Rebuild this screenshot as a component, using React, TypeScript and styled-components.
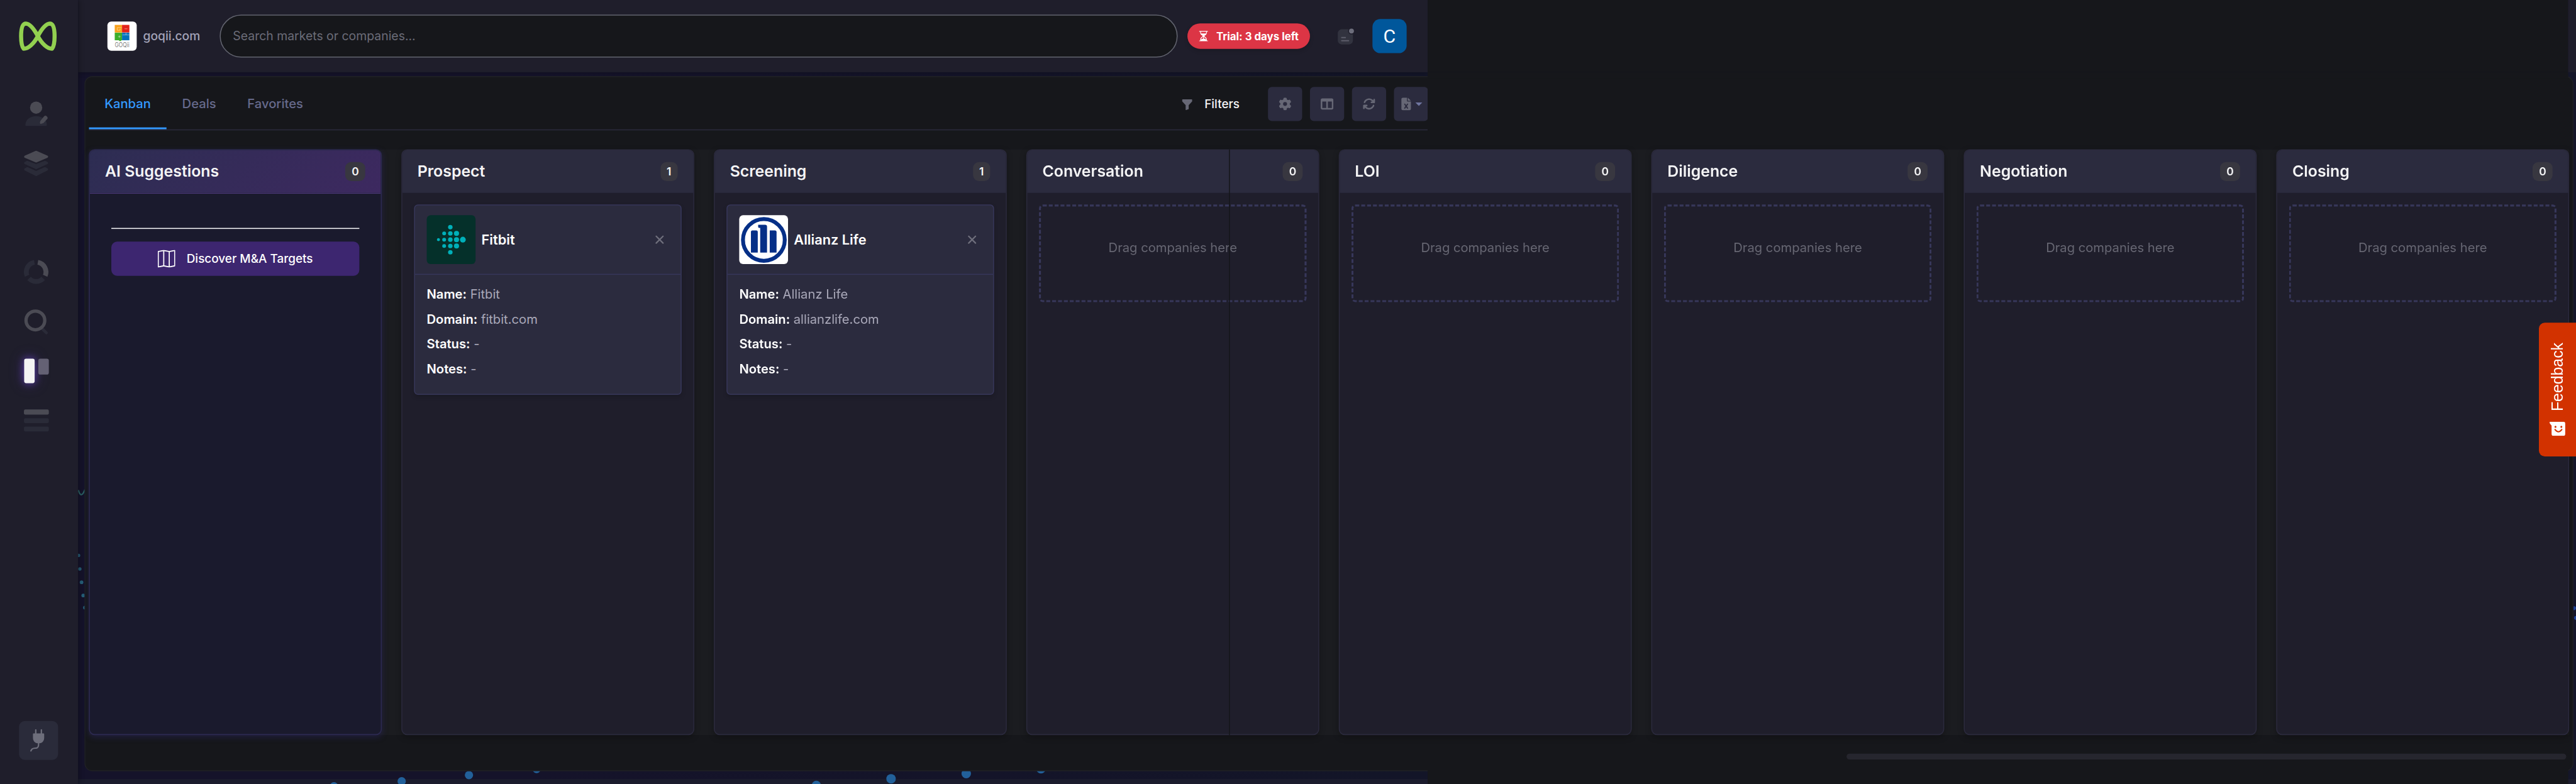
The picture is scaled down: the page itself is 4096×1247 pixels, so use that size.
import React from "react";
import styled, { createGlobalStyle, css } from "styled-components";
import { BsFunnelFill, BsHourglassSplit, BsMap, BsPlugFill } from "react-icons/bs";
import { FaArrowsRotate, FaFileExcel, FaGear, FaTableColumns } from "react-icons/fa6";

const WIDTH = 5276;
const HEIGHT = 1606;
const SCALE = 4096 / WIDTH;

const c = {
  base: "#16171b",
  surface: "#1f1e2b",
  raised: "#2b2b3e",
  line: "#2b2a3d",
  cardLine: "#37375a",
  muted: "#666775",
  text: "#f4f4f5",
};

const GlobalStyle = createGlobalStyle`
  * { box-sizing: border-box; }
  html, body { margin: 0; padding: 0; background: ${c.base}; overflow: hidden; }
  body { font-family: Inter, "Liberation Sans", sans-serif; color: ${c.text}; }
`;

const Viewport = styled.div`
  width: 4096px;
  height: 1247px;
  overflow: hidden;
  background: ${c.base};
`;

const Shell = styled.div`
  position: relative;
  display: flex;
  width: ${WIDTH}px;
  height: ${HEIGHT + 1}px;
  transform: scale(${SCALE});
  transform-origin: 0 0;
  background: linear-gradient(90deg, #15132a 0, #15132a 20%, #131528 55%, #15162a 100%);
`;

const Backdrop = styled.svg`
  position: absolute;
  inset: 0;
`;

/* ---------- sidebar ---------- */

const Sidebar = styled.nav`
  position: relative;
  z-index: 2;
  flex: none;
  width: 160px;
  display: flex;
  flex-direction: column;
  background: ${c.surface};
  box-shadow: 2px 0 10px rgba(0, 0, 0, 0.3);
`;

const Brand = styled.div`
  height: 184px;
  padding: 40px 0 0 35px;
`;

const NavItem = styled.div<{ $gap?: number; $active?: boolean }>`
  flex: none;
  height: 60px;
  margin-top: ${(p) => p.$gap ?? 42}px;
  padding-left: 44px;
  svg {
    display: block;
    overflow: visible;
  }
  ${(p) =>
    p.$active &&
    css`
      rect:first-child {
        filter: drop-shadow(0 0 8px rgba(98, 62, 190, 0.8)) drop-shadow(0 0 12px rgba(98, 62, 190, 0.3));
      }
    `}
`;

const PlugButton = styled.div`
  width: 80px;
  height: 80px;
  margin: auto 0 50px 39px;
  display: flex;
  align-items: center;
  justify-content: center;
  border-radius: 12px;
  background: #2a2b3a;
  color: #6d6e7b;
  font-size: 46px;
`;

/* ---------- header ---------- */

const Main = styled.div`
  position: relative;
  flex: 1;
  min-width: 0;
  display: flex;
  flex-direction: column;
`;

const TopRow = styled.div`
  flex: none;
  display: flex;
  height: 148px;
`;

const Header = styled.header`
  width: 2764px;
  display: flex;
  align-items: center;
  padding-left: 60px;
  background: ${c.surface};
  box-shadow: 0 2px 10px rgba(0, 0, 0, 0.25);
`;

const HeaderGap = styled.div`
  flex: 1;
  background: ${c.base};
`;

const HeaderEdge = styled.div`
  width: 16px;
  background: ${c.surface};
`;

const CompanyLogo = styled.svg`
  flex: none;
  width: 60px;
  height: 60px;
  border-radius: 8px;
  background: #fff;
`;

const Domain = styled.span`
  width: 116px;
  margin: 0 41px 0 13px;
  font-size: 24.8px;
  font-weight: 500;
  color: #a3a3b8;
  white-space: nowrap;
`;

const Search = styled.div`
  width: 1962px;
  height: 88px;
  display: flex;
  align-items: center;
  padding: 0 0 1px 25px;
  border: 2px solid #62646f;
  border-radius: 44px;
  background: ${c.base};
  color: #6b6c78;
  font-size: 25px;
`;

const Trial = styled.div`
  width: 251px;
  height: 52px;
  margin-left: 20px;
  display: flex;
  align-items: center;
  padding-left: 21px;
  gap: 14px;
  border-radius: 26px;
  background: #dc3545;
  box-shadow: 0 4px 8px rgba(0, 0, 0, 0.15);
  color: #fff;
  font-size: 21.7px;
  font-weight: 700;
  white-space: nowrap;
  svg { font-size: 24px; }
`;

const NoteIcon = styled.svg`
  flex: none;
  margin: 0 36px 0 55px;
`;

const Avatar = styled.div`
  width: 70px;
  height: 70px;
  display: flex;
  align-items: center;
  justify-content: center;
  border-radius: 16px;
  background: #00579b;
  color: #fff;
  font: 400 39px Roboto, sans-serif;
`;

/* ---------- panel and toolbar ---------- */

const Panel = styled.main`
  width: 5098px;
  height: 1424px;
  margin: 8px 0 0 13px;
  padding: 0 7px;
  display: flex;
  flex-direction: column;
  border: 2px solid #1f2024;
  border-radius: 16px;
  background: ${c.base};
`;

const Toolbar = styled.div`
  flex: none;
  width: 2742px;
  height: 109px;
  display: flex;
  border-bottom: 2px solid ${c.line};
  overflow: hidden;
`;

const Tab = styled.div<{ $active?: boolean }>`
  height: 107px;
  padding: 6px 32px 0;
  display: flex;
  align-items: center;
  border-bottom: 4px solid ${(p) => (p.$active ? "#3399ff" : "transparent")};
  color: ${(p) => (p.$active ? "#3399ff" : "#666a8c")};
  font-size: 26px;
  font-weight: 500;
`;

const Filters = styled.div`
  margin-left: auto;
  width: 178px;
  display: flex;
  align-items: center;
  gap: 23px;
  padding-top: 2px;
  font-size: 24.3px;
  font-weight: 500;
  svg { font-size: 25px; color: ${c.muted}; position: relative; top: 2px; }
`;

const Tools = styled.div`
  display: flex;
  gap: 16px;
  padding-top: 20px;
  margin-right: -1px;
`;

const Tool = styled.div`
  width: 70px;
  height: 70px;
  display: flex;
  align-items: center;
  justify-content: center;
  gap: 6px;
  border-radius: 8px;
  background: ${c.raised};
  color: ${c.muted};
  font-size: 26px;
`;

const Caret = styled.i`
  border: 7px solid transparent;
  border-top-color: #7076a0;
  border-bottom: 0;
`;

/* ---------- board ---------- */

const Board = styled.div`
  flex: none;
  height: 1200px;
  margin-top: 39px;
  display: flex;
  gap: 40px;
  background: #1b1c20;
`;

const Column = styled.section<{ $ai?: boolean }>`
  flex: none;
  width: 600px;
  display: flex;
  flex-direction: column;
  border: 2px solid ${(p) => (p.$ai ? "#2d2a52" : c.line)};
  border-radius: 12px;
  background: ${(p) => (p.$ai ? "#1a1a2d" : c.surface)};
  box-shadow: ${(p) =>
    p.$ai ? "0 4px 12px rgba(50, 44, 120, 0.35)" : "0 4px 12px rgba(0, 0, 0, 0.25)"};
`;

const ColumnHead = styled.div<{ $ai?: boolean }>`
  flex: none;
  height: ${(p) => (p.$ai ? 89 : 87)}px;
  padding: 0 32px;
  display: flex;
  align-items: center;
  justify-content: space-between;
  border-radius: 10px 10px 0 0;
  background: ${(p) => (p.$ai ? "linear-gradient(135deg, #2d2d52, #3d2960)" : c.raised)};
  border-bottom: ${(p) => (p.$ai ? "2px solid #4b3878" : "0")};
`;

const ColumnTitle = styled.h2`
  margin: 0 0 2px -1px;
  font-size: 32px;
  font-weight: 600;
`;

const Count = styled.span`
  height: 39px;
  padding: 0 13px;
  border-radius: 12px;
  background: #383740;
  font-size: 22.4px;
  font-weight: 600;
  line-height: 39px;
`;

const ColumnBody = styled.div`
  padding: 24px;
`;

const Suggest = styled.div`
  margin: 70px 44px 0;
  border-top: 2px solid ${c.text};
  padding-top: 26px;
`;

const SuggestButton = styled.div`
  height: 70px;
  display: flex;
  align-items: center;
  justify-content: center;
  gap: 23px;
  border-radius: 12px;
  background: #3d2670;
  color: #fff;
  font-size: 24.4px;
  font-weight: 500;
  svg { font-size: 36px; }
`;

const DropZone = styled.div`
  height: 200px;
  padding-top: 64px;
  border: 4px dashed ${c.cardLine};
  border-radius: 8px;
  color: #666672;
  font-size: 26px;
  line-height: 39px;
  text-align: center;
`;

const Card = styled.article`
  height: 390px;
  border: 2px solid ${c.cardLine};
  border-radius: 8px;
  background: ${c.raised};
  box-shadow: 0 4px 8px rgba(0, 0, 0, 0.15);
`;

const CardHead = styled.div`
  height: 142px;
  padding: 0 34px 0 24px;
  display: flex;
  align-items: center;
  gap: 12px;
  border-bottom: 2px solid ${c.cardLine};
`;

const CardLogo = styled.svg<{ $bg: string }>`
  width: 100px;
  height: 100px;
  border-radius: 8px;
  background: ${(p) => p.$bg};
`;

const CardName = styled.h3`
  flex: 1;
  margin: 0 0 1px;
  color: #fff;
  font-size: 28px;
  font-weight: 600;
`;

const CardBody = styled.div`
  padding: 20px 24px;
`;

const Field = styled.p`
  margin: 0 0 12px;
  font-size: 26px;
  line-height: 39px;
  color: #a9a8b9;
  strong { font-weight: 600; color: #fff; }
`;

/* ---------- overlays ---------- */

const Cover = styled.div<{ $y: number; $h: number }>`
  position: absolute;
  left: 2764px;
  width: 2336px;
  top: ${(p) => p.$y}px;
  height: ${(p) => p.$h}px;
  background: ${c.base};
`;

const Seam = styled.div`
  position: absolute;
  left: 2357px;
  top: 306px;
  width: 2px;
  height: 1200px;
  background: ${c.base};
`;

const ScrollThumb = styled.div`
  position: absolute;
  left: 3622px;
  top: 1544px;
  width: 1474px;
  height: 12px;
  border-radius: 6px;
  background: #26262e;
`;

const Feedback = styled.div`
  position: absolute;
  right: 0;
  top: 661px;
  width: 76px;
  height: 274px;
  display: flex;
  flex-direction: column;
  align-items: center;
  justify-content: space-between;
  padding: 41px 0 42px;
  border-radius: 12px 0 0 12px;
  background: #d23200;
`;

const FeedbackLabel = styled.span`
  writing-mode: vertical-rl;
  transform: rotate(180deg);
  color: #fff;
  font: 400 32px/38px "Liberation Sans", Arial, sans-serif;
`;

/* ---------- drawings ---------- */

const LIT = "#4b4b54";
const DIM = "#2a2b38";

const BrandMark = () => (
  <svg width="85" height="70" viewBox="35 40 85 70" fill="none" stroke="#92d050" strokeWidth="8.4">
    <path
      strokeLinejoin="round"
      d="M77.5 74C70 60 62 48.5 53 48.2C46 48.2 43.2 58 43.2 74C43.2 86 45 96 48.5 99.8C58 99.8 69 90 77.5 74C85 60 93 48.5 102 48.2C109 48.2 111.8 58 111.8 74C111.8 86 110 96 106.5 99.8C97 99.8 86 90 77.5 74Z"
    />
  </svg>
);

const UserIcon = () => (
  <svg width="60" height="60" viewBox="0 0 60 60">
    <circle cx="30" cy="16.500" r="12.500" fill={LIT} />
    <path d="M8 52C8 41 18 34 30 34S52 41 52 52Q52 54 50 54H10Q8 54 8 52Z" fill={DIM} />
    <path d="M38.500 44L46 34.500Q49 31.500 52 34.500T52.500 40L45 48L39 50Q37 49 38.500 44Z" fill={LIT} />
  </svg>
);

const LayersIcon = () => (
  <svg width="60" height="60" viewBox="0 0 60 60" strokeLinejoin="round" strokeWidth="5">
    <path d="M8 42L30 53L52 42L48 40L30 48L12 40Z" fill={DIM} stroke={DIM} />
    <path d="M8 29L30 39L52 29L48 27L30 34L12 27Z" fill={DIM} stroke={DIM} />
    <path d="M8 16L30 6.500L52 16L30 25.500Z" fill={LIT} stroke={LIT} />
  </svg>
);

const DonutIcon = () => (
  <svg width="60" height="60" viewBox="0 0 60 60" fill="none" strokeWidth="10" strokeLinecap="butt">
    <path d="M33.500 10.500A20 20 0 0 1 48.500 38" stroke={LIT} />
    <path d="M26.500 10.500A20 20 0 0 0 11.500 38" stroke={DIM} />
    <path d="M15.500 43.500A20 20 0 0 0 44.500 43.500" stroke={DIM} />
  </svg>
);

const SearchIcon = () => (
  <svg width="60" height="60" viewBox="0 0 60 60" fill="none">
    <path d="M43 45L51 53" stroke={DIM} strokeWidth="6" strokeLinecap="round" />
    <circle cx="28.500" cy="27.500" r="19.200" stroke={LIT} strokeWidth="6.800" />
  </svg>
);

const KanbanIcon = () => (
  <svg width="60" height="60" viewBox="0 0 60 60">
    <rect x="5.500" y="5" width="21.500" height="50" rx="4" fill="#f4f4f5" />
    <rect x="34.500" y="5" width="21.500" height="32.500" rx="4" fill="#646174" />
  </svg>
);

const ListIcon = () => (
  <svg width="60" height="60" viewBox="0 0 60 60">
    <rect x="5" y="8" width="51" height="10.500" rx="3" fill={LIT} />
    <rect x="5" y="26" width="51" height="10" rx="3" fill={DIM} />
    <rect x="5" y="43" width="51" height="10" rx="3" fill={DIM} />
  </svg>
);

const FitbitLogo = () => {
  const cols = [24, 35.7, 48.3, 61, 74];
  const radii = [3, 3.9, 4.6, 5.2, 5.9];
  const rows: [number, number[]][] = [
    [24.4, [2]],
    [37.2, [1, 2, 3]],
    [50, [0, 1, 2, 3, 4]],
    [62.9, [1, 2, 3]],
    [75.8, [2]],
  ];
  return (
    <CardLogo $bg="#05302a" viewBox="0 0 100 100">
      {rows.map(([y, xs]) =>
        xs.map((i) => <circle key={`${y}-${i}`} cx={cols[i]} cy={y} r={radii[i]} fill="#00b0b9" />),
      )}
    </CardLogo>
  );
};

const AllianzLogo = () => (
  <CardLogo $bg="#fff" viewBox="0 0 100 100">
    <circle cx="50.500" cy="50.500" r="42.800" fill="none" stroke="#052f87" strokeWidth="8" />
    <g fill="#052f87">
      <path d="M24 76.500V34Q24 31 27 31H35Q38 31 38 34V76.500Z" />
      <path d="M43 76.500V26Q38.800 26.500 38.800 24V19.500H53Q57 19.500 57 23.500V76.500Z" />
      <path d="M62.500 76.500V31H73Q76.500 31 76.500 34.500V76.500Z" />
    </g>
  </CardLogo>
);

const CloseIcon = () => (
  <svg width="18" height="18" viewBox="0 0 18 18" stroke="#6f6f7c" strokeWidth="2.800" strokeLinecap="round">
    <path d="M2 2L16 16M16 2L2 16" />
  </svg>
);

/* ---------- data ---------- */

type Company = { name: string; domain: string; logo: React.ReactNode };

const stages: { title: string; company?: Company }[] = [
  { title: "Prospect", company: { name: "Fitbit", domain: "fitbit.com", logo: <FitbitLogo /> } },
  { title: "Screening", company: { name: "Allianz Life", domain: "allianzlife.com", logo: <AllianzLogo /> } },
  { title: "Conversation" },
  { title: "LOI" },
  { title: "Diligence" },
  { title: "Negotiation" },
  { title: "Closing" },
];

const backdropDots: [number, number, number, string][] = [
  [161, 1138, 3.4, "#265a72"],
  [163.5, 1165.6, 3.5, "#265a72"],
  [167, 1193, 3.7, "#265f78"],
  [170.5, 1220, 3.8, "#265f78"],
  [174, 1245, 3.8, "#265f78"],
  [684, 1611, 8.5, "#22609a"],
  [822.7, 1600.7, 8.5, "#22609a"],
  [960.5, 1588, 8.5, "#22609a"],
  [1099, 1575.5, 8.5, "#22609a"],
  [1672, 1609, 9.5, "#22609a"],
  [1825, 1595.5, 9.7, "#22609a"],
  [1979, 1585, 9.7, "#22609a"],
  [2132, 1575, 9.7, "#22609a"],
  [5272, 1246, 4, "#1f4499"],
  [5276, 1266, 4, "#1f4499"],
];

const CompanyCard = ({ name, domain, logo }: Company) => (
  <Card>
    <CardHead>
      {logo}
      <CardName>{name}</CardName>
      <CloseIcon />
    </CardHead>
    <CardBody>
      <Field><strong>Name:</strong> {name}</Field>
      <Field><strong>Domain:</strong> {domain}</Field>
      <Field><strong>Status:</strong> -</Field>
      <Field><strong>Notes:</strong> -</Field>
    </CardBody>
  </Card>
);

export default function App() {
  return (
    <Viewport>
      <GlobalStyle />
      <Shell>
        <Backdrop width={WIDTH} height={HEIGHT + 1}>
          <rect x="160" y="1596" width={WIDTH} height="11" fill="#1b1c2d" />
          {backdropDots.map(([x, y, r, fill], i) => (
            <circle key={i} cx={x} cy={y} r={r} fill={fill} />
          ))}
          <path d="M160.500 1004Q163 1013.500 166.500 1013.500T174 1003" fill="none" stroke="#2a5f62" strokeWidth="3" />
        </Backdrop>

        <Sidebar>
          <Brand><BrandMark /></Brand>
          <NavItem $gap={20}><UserIcon /></NavItem>
          <NavItem $gap={41}><LayersIcon /></NavItem>
          <NavItem $gap={162}><DonutIcon /></NavItem>
          <NavItem $gap={42}><SearchIcon /></NavItem>
          <NavItem $gap={41} $active><KanbanIcon /></NavItem>
          <NavItem $gap={41}><ListIcon /></NavItem>
          <PlugButton><BsPlugFill /></PlugButton>
        </Sidebar>

        <Main>
          <TopRow>
            <Header>
              <CompanyLogo viewBox="0 0 60 60">
                <rect x="15" y="7" width="15" height="15.500" fill="#f9a11b" />
                <rect x="30" y="7" width="15" height="15.500" fill="#e2231a" />
                <rect x="15" y="23" width="15" height="15.500" fill="#3dae2b" />
                <path d="M23 38H28V40H25Z" fill="#3dae2b" />
                <rect x="30" y="23" width="15" height="15.500" fill="#0072bc" />
                <path d="M29 12.500H20V18H26V15M35 15H41M22 31H27M24.500 28.500V33.500M31 27.500H45M38 23V27.500" fill="none" stroke="#fff" strokeOpacity="0.6" strokeWidth="1" />
                <text x="15" y="52" textLength="30" lengthAdjust="spacingAndGlyphs" fontFamily="Inter, sans-serif" fontSize="13.500" fill="#858585">GOQii</text>
              </CompanyLogo>
              <Domain>goqii.com</Domain>
              <Search>Search markets or companies...</Search>
              <Trial><BsHourglassSplit />Trial: 3 days left</Trial>
              <NoteIcon width="37" height="40" viewBox="0 0 37 40">
                <rect x="2" y="6" width="31" height="31" rx="8" fill="#32333f" />
                <circle cx="30" cy="9.500" r="7" fill={c.surface} />
                <circle cx="30" cy="9.500" r="5" fill="#6d6e7c" />
                <path d="M10 23H17.500M10 29.500H24" stroke="#5d5e6b" strokeWidth="2.600" strokeLinecap="round" />
              </NoteIcon>
              <Avatar>C</Avatar>
            </Header>
            <HeaderGap />
            <HeaderEdge />
          </TopRow>

          <Panel>
            <Toolbar>
              <Tab $active>Kanban</Tab>
              <Tab>Deals</Tab>
              <Tab>Favorites</Tab>
              <Filters><BsFunnelFill />Filters</Filters>
              <Tools>
                <Tool><FaGear /></Tool>
                <Tool><FaTableColumns /></Tool>
                <Tool><FaArrowsRotate /></Tool>
                <Tool><FaFileExcel /><Caret /></Tool>
              </Tools>
            </Toolbar>

            <Board>
              <Column $ai>
                <ColumnHead $ai>
                  <ColumnTitle>AI Suggestions</ColumnTitle>
                  <Count>0</Count>
                </ColumnHead>
                <Suggest>
                  <SuggestButton><BsMap />Discover M&amp;A Targets</SuggestButton>
                </Suggest>
              </Column>
              {stages.map(({ title, company }) => (
                <Column key={title}>
                  <ColumnHead>
                    <ColumnTitle>{title}</ColumnTitle>
                    <Count>{company ? 1 : 0}</Count>
                  </ColumnHead>
                  <ColumnBody>
                    {company ? <CompanyCard {...company} /> : <DropZone>Drag companies here</DropZone>}
                  </ColumnBody>
                </Column>
              ))}
            </Board>
          </Panel>

          <Cover $y={148} $h={12} />
          <Cover $y={1574} $h={34} />
          <Seam />
          <ScrollThumb />
        </Main>

        <Feedback>
          <FeedbackLabel>Feedback</FeedbackLabel>
          <svg width="32" height="29" viewBox="0 0 32 29">
            <path d="M0 0H28Q32 0 32 4V25Q32 29 28 29H8Q4 29 4 25V8L0 3Z" fill="#fff" />
            <circle cx="12" cy="10.500" r="2" fill="#d23200" />
            <circle cx="24" cy="10.500" r="2" fill="#d23200" />
            <path d="M11 16Q18 25 25 16" fill="none" stroke="#d23200" strokeWidth="2.600" strokeLinecap="round" />
          </svg>
        </Feedback>
      </Shell>
    </Viewport>
  );
}
